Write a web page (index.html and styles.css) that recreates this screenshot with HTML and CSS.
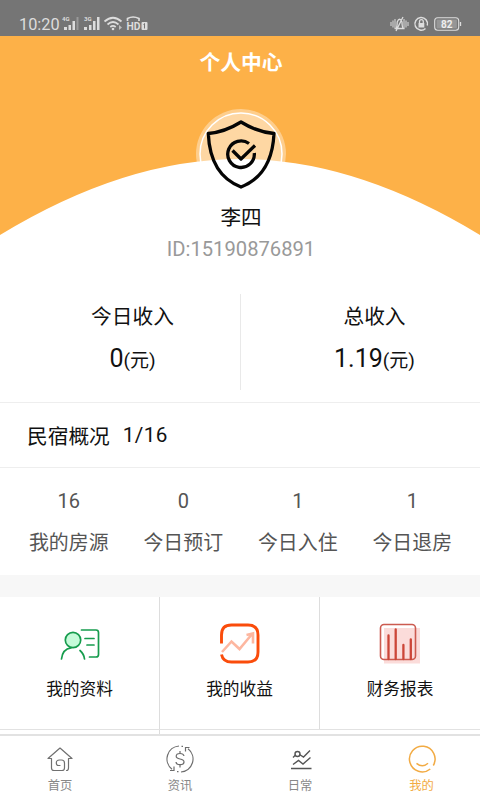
FILE: index.html
```html
<!DOCTYPE html>
<html lang="zh-CN">
<head>
<meta charset="utf-8">
<title>个人中心</title>
<link rel="stylesheet" href="styles.css">
</head>
<body>
<div class="app">
  <header class="status">
    <span class="clock">10:20</span>
    <svg class="signals" width="90" height="18" viewBox="0 0 90 18" fill="#ddd">
      <text x="0" y="6" class="net">4G</text>
      <path d="M2 12h3v3H2zM6.500 10h2.500v5H6.500zM10.500 6h2.500v9h-2.500z"/><path d="M14.500 2h2v13h-2z" opacity=".35"/>
      <text x="22" y="6" class="net">3G</text>
      <path d="M22 12h3v3h-3zM27 10h2.500v5H27zM31 6h2.500v9H31zM35 2h2.500v13H35z"/>
      <g fill="none" stroke="#ddd" stroke-width="1.700"><path d="M42.500 6.500Q51 -1 59.500 6.500M45.500 9.500Q51 4.500 56.500 9.500M48.300 12Q51 9.800 53.700 12"/><path d="M65.500 6V3.500Q71 .5 77 3.500V6"/></g>
      <circle cx="51" cy="14" r="1.300"/><path d="M57 10l3 2.500-3 2.500z" opacity=".7"/>
      <text x="64.500" y="15" class="hd" textLength="14" lengthAdjust="spacingAndGlyphs">HD</text>
      <rect x="79.500" y="7" width="6" height="8" rx="1"/><path d="M81.500 9.500l1-1v5" stroke="#757575" fill="none"/>
    </svg>
    <svg class="system" width="72" height="18" viewBox="0 0 72 18" fill="none" stroke="#ddd" stroke-width="1.300">
      <path d="M1 7v4M3 5.500v7M5 4v10M14 4v10M16 5.500v7M18 7v4" stroke-width="1"/>
      <path d="M6 13.500Q7.200 12 7.200 7Q9.500 1.500 12 7Q12 12 13.300 13.500zM6 16L13 2"/>
      <path d="M35.500 13.500A6.300 6.300 0 1 1 37.300 10.500" stroke-width="1.500"/>
      <path d="M29.500 8V6.500a1.900 1.900 0 0 1 3.800 0V8"/><path d="M28.500 8h5.800v4.500h-5.800z" fill="#ddd" stroke="none"/>
      <rect x="44.700" y="2.700" width="24" height="12.600" rx="3" stroke-width="1.100"/><rect x="46.500" y="4.500" width="20.400" height="9" fill="#969696" stroke="none"/><path d="M70.500 7v4"/>
      <text x="51" y="12.800" class="batt">82</text>
    </svg>
  </header>

  <section class="hero">
    <svg class="backdrop" width="480" height="200" viewBox="0 0 480 200"><path d="M0 0H480V199Q355 123 240 123Q125 123 0 199Z" fill="#fdb148"/></svg>
    <h1>个人中心</h1>
    <svg class="avatar" width="92" height="92" viewBox="0 0 92 92" fill="none">
      <circle cx="46" cy="46" r="45" fill="#fff" opacity=".38"/>
      <circle cx="46" cy="46" r="41" fill="#fff" fill-opacity=".2" stroke="#fff" stroke-width="1.500"/>
      <g stroke="#050505" stroke-width="3.300" stroke-linejoin="round">
        <path d="M46 14Q30 24 13.300 25.500Q15 67 46 79Q77 67 79 25.500Q62 24 46 14Z"/>
        <path d="M54 35.500A13.300 13.300 0 1 0 59.300 45M37.500 42.500L46 51L60 37.500"/>
      </g>
    </svg>
    <div class="name">李四</div>
    <div class="uid">ID:15190876891</div>
  </section>

  <section class="income">
    <div class="income-item"><div>今日收入</div><div class="amount">0<small>(元)</small></div></div>
    <div class="income-item"><div>总收入</div><div class="amount">1.19<small>(元)</small></div></div>
  </section>

  <h2 class="overview"><span>民宿概况</span><span class="ratio">1/16</span></h2>

  <section class="stats">
    <div><b>16</b><span>我的房源</span></div>
    <div><b>0</b><span>今日预订</span></div>
    <div><b>1</b><span>今日入住</span></div>
    <div><b>1</b><span>今日退房</span></div>
  </section>

  <section class="menu">
    <a class="tile">
      <svg width="42" height="42" viewBox="0 0 42 42" fill="none" stroke="#169c4d" stroke-width="1.700" stroke-linecap="round" stroke-linejoin="round">
        <circle cx="14" cy="17" r="7.700" fill="#c5fbd9"/><path d="M2.500 36Q3.500 26 12 24.800M21 27.500Q25 31 25.500 36M22.500 7H37Q39.500 7 39.500 9.500V31.500Q39.500 34 37 34H30.500M26 15.500h9M28 22h7"/>
      </svg><span>我的资料</span>
    </a>
    <a class="tile">
      <svg width="42" height="42" viewBox="0 0 42 42" fill="none">
        <path d="M3 29L12.500 18.500L20.500 26L33.500 10.500M27.500 12L34 10.500V20.500" stroke="#fdb7a0" stroke-width="2.600"/>
        <path d="M2.500 20.500V12Q2.500 2 12.500 2H29Q39 2 39 12V29Q39 39 29 39H12.500Q4 39 2.500 31.500" stroke="#fa4c0b" stroke-width="2.900"/>
      </svg><span>我的收益</span>
    </a>
    <a class="tile">
      <svg width="42" height="42" viewBox="0 0 42 42" fill="none">
        <path d="M5 5H41V40.500H5Z" fill="#fbdcda"/><rect x="1.500" y="1.500" width="35" height="35" rx="3.500" stroke="#cc5b50" stroke-width="1.600"/>
        <path d="M9.500 12.500v23.500M16.700 6.500v29.500M24.400 22V36M31.800 16.500v19.500" stroke="#cc4638" stroke-width="2.300" stroke-linecap="round"/>
      </svg><span>财务报表</span>
    </a>
  </section>
  <div class="menu-next"></div>

  <nav class="tabs">
    <a><svg width="30" height="30" viewBox="0 0 30 30" fill="none" stroke="#707070" stroke-width="1.200" stroke-linejoin="round" stroke-linecap="round"><path d="M6.500 14.500H3L15 4L27 14.500H23.500V24Q23.500 26.500 21.500 26.500M6.500 14.500V24Q6.500 26.500 9 26.500H17Q19.500 26.500 19.500 24V19Q19.500 16 16.500 16H14.500Q11.300 16 11.300 19Q11.300 21.500 13.500 21.500H15"/></svg><span>首页</span></a>
    <a><svg width="30" height="30" viewBox="0 0 30 30" fill="none" stroke="#6c6c6c" stroke-width="1.200"><path d="M14 2A13 13 0 0 0 7 25.200M16 28A13 13 0 0 0 23 4.800M16.500 2.300h1.500M12 27.700h1.500M24.500 3.500H20.500V7.500M5 26.500H9V22.500M15 7v2.500M15 20.500v3"/><path d="M19 12Q18.500 9.500 15 9.500Q11.200 9.500 11.200 12.300Q11.200 14.300 15 15Q19 15.800 19 18Q19 20.700 15 20.700Q11.200 20.700 11 18"/></svg><span>资讯</span></a>
    <a><svg width="30" height="30" viewBox="0 0 30 30" fill="none" stroke="#555" stroke-width="1.400"><path d="M6 24.500H26.500M8 20.500L13.500 16.500L18 20L25.500 13.500M8 13.500L10.500 11M14.500 10.500L18.500 13L25 6.500"/><circle cx="12.500" cy="10" r="2.500"/></svg><span>日常</span></a>
    <a class="active"><svg width="30" height="30" viewBox="0 0 30 30" fill="none" stroke="#f2ab44" stroke-width="1.500"><path d="M23.300 25A12.800 12.800 0 1 1 26.300 21.500M9.500 19.300Q15.500 24.300 21 19.300"/></svg><span>我的</span></a>
  </nav>
</div>
</body>
</html>
```
FILE: styles.css
```css
* { box-sizing: border-box; }
body { margin: 0; font-family: Roboto, "Noto Sans CJK SC", sans-serif; color: #111; background: #fff; }
.app { width: 480px; height: 800px; display: flex; flex-direction: column; overflow: hidden; background: #fff; }

.status { height: 36px; flex: none; display: flex; align-items: flex-end; padding: 0 18px 3px 19px; background: #757575; color: #ddd; }
.clock { font-size: 16.300px; line-height: 16px; width: 43px; }
.system { margin-left: auto; }
.net { font-size: 6px; font-weight: 700; }
.hd { font-size: 10.500px; font-weight: 700; }
.batt { font-size: 10px; font-weight: 700; fill: #eee; stroke: none; }

.hero { position: relative; height: 258px; flex: none; display: flex; flex-direction: column; align-items: center; padding-left: 2px; }
.backdrop { position: absolute; left: 0; top: 0; }
.hero > :not(.backdrop) { position: relative; }
h1 { margin: 12px 0 0; font-size: 20.800px; line-height: 30px; font-weight: 700; color: #fff; }
.avatar { margin-top: 30px; }
.name { margin-top: 3px; font-size: 20.600px; line-height: 30px; }
.uid { margin-top: 1px; font-size: 20.200px; line-height: 30px; color: #999; }

.income { display: grid; grid-template-columns: 240px 240px; height: 96px; flex: none; }
.income-item { padding: 8px 0 0 25px; text-align: center; font-size: 20.700px; line-height: 30px; }
.income-item + .income-item { border-left: 1px solid #e9e9e9; padding-left: 28px; }
.amount { margin-top: 12px; font-size: 25px; }
.amount small { font-size: 19px; }

.overview { margin: 12px 0 0; height: 66px; flex: none; display: flex; align-items: center; gap: 13px; padding: 0 27px; border-top: 1px solid #eee; border-bottom: 1px solid #eee; font-size: 20.700px; font-weight: 400; }
.ratio { letter-spacing: .4px; }

.stats { display: grid; grid-template-columns: repeat(4, 114.500px); height: 107px; flex: none; padding: 18px 11px 0; text-align: center; color: #555; }
.stats b, .stats span { display: block; font-weight: 400; line-height: 30px; }
.stats b { font-size: 20px; padding-left: 1px; }
.stats span { margin-top: 13px; font-size: 19.900px; padding-left: 1px; }

.menu { display: grid; grid-template-columns: 160px 160px 160px; height: 155px; flex: none; border-top: 22px solid #f7f7f7; border-bottom: 1px solid #e2e2e2; }
.tile { display: flex; flex-direction: column; align-items: center; padding-top: 26px; font-size: 16.700px; line-height: 24px; }
.tile:not(:last-child) { border-right: 1px solid #ddd; }
.tile span { margin-top: 13px; }
.menu-next { height: 4px; width: 160px; flex: none; border-right: 1px solid #ddd; }

.tabs { display: grid; grid-template-columns: repeat(4, 1fr); height: 66px; flex: none; border-top: 2px solid #e2e2e2; background: #fff; }
.tabs a { display: flex; flex-direction: column; align-items: center; padding-top: 8px; font-size: 12.300px; line-height: 18px; color: #888; }
.tabs span { margin-top: 3px; }
.tabs .active { color: #f2ab44; padding-left: 3px; }
```
